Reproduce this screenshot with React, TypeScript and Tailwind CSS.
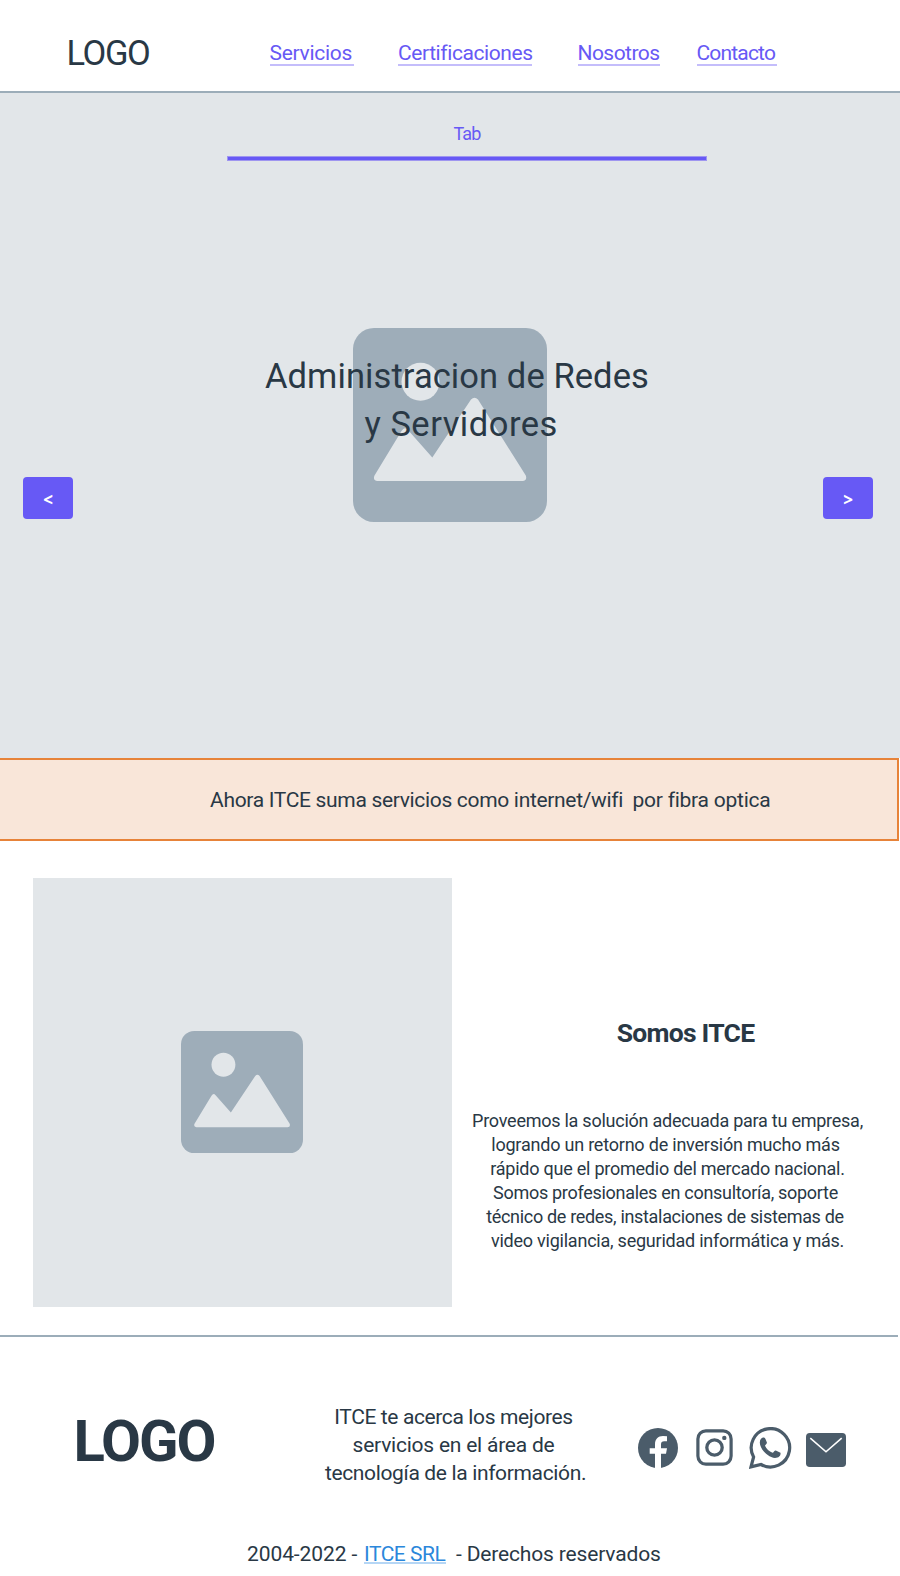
const paragraph = [
  { text: "Proveemos la solución adecuada para tu empresa,", style: "tracking-[-0.25px]" },
  { text: "logrando un retorno de inversión mucho más", style: "tracking-[-0.21px] pr-1" },
  { text: "rápido que el promedio del mercado nacional.", style: "tracking-[-0.235px]" },
  { text: "Somos profesionales en consultoría, soporte", style: "tracking-[-0.29px] pr-1" },
  { text: "técnico de redes, instalaciones de sistemas de", style: "tracking-[-0.32px] pr-[5px]" },
  { text: "video vigilancia, seguridad informática y más.", style: "tracking-[-0.23px]" },
];

const links = [
  { text: "Servicios", style: "w-[84px] tracking-[-0.28px]" },
  { text: "Certificaciones", style: "w-[134px] ml-[44.5px] tracking-[-0.42px]" },
  { text: "Nosotros", style: "w-[82px] ml-[45.5px] tracking-[-0.55px]" },
  { text: "Contacto", style: "w-[80px] ml-[37px] tracking-[-0.82px]" },
];

function ImagePlaceholder({ className }: { className: string }) {
  return (
    <svg viewBox="0 0 194 194" className={className} aria-hidden="true">
      <rect width="194" height="194" rx="21" fill="#9eadb9" />
      <circle cx="67.5" cy="53.7" r="19" fill="#e2e6e9" />
      <path
        fill="#e2e6e9"
        d="M24.5 153Q19.5 152.5 21.5 147.5L48.5 103Q51.5 98 55 102L79.3 129.5L118 71.5Q121.5 68 125 71.5L172.8 147.5Q174.5 152.5 169.5 153Z"
      />
    </svg>
  );
}

function ArrowButton({ children, label }: { children: string; label: string }) {
  return (
    <button
      aria-label={label}
      className="flex h-[42px] w-[50px] items-center justify-center rounded bg-[#6759f5] pt-[3px] font-['Open_Sans',sans-serif] text-[17px] leading-none font-bold text-white"
    >
      {children}
    </button>
  );
}

function Header() {
  return (
    <header className="flex h-[93px] items-start border-b-2 border-[#9cadb9]">
      <div className="mt-[33px] ml-[66.5px] w-[203px] text-[34.5px] leading-10 tracking-[-1.4px]">LOGO</div>
      <nav className="mt-10 flex">
        {links.map((l) => (
          <a
            key={l.text}
            href="#"
            className={`block h-[26px] border-b-2 border-[#c4bdfb] text-[21px] leading-[26px] whitespace-nowrap text-[#6759f5] ${l.style}`}
          >
            {l.text}
          </a>
        ))}
      </nav>
    </header>
  );
}

function Hero() {
  return (
    <section className="grid h-[665px] bg-[#e2e6e9]">
      <div className="col-start-1 row-start-1 flex justify-center pt-[235px]">
        <ImagePlaceholder className="size-[194px]" />
      </div>
      <div className="z-10 col-start-1 row-start-1">
        <div className="ml-[227px] w-[480px] pt-[29px] text-center text-lg leading-6 tracking-[-0.9px] text-[#6759f5]">
          Tab
          <div className="mt-[10px] h-[5px] border border-[#9f96f0] bg-[#6759f5]" />
        </div>
        <h1 className="mt-[191px] text-[34.5px] leading-[48px] whitespace-nowrap">
          <span className="block pl-[265px] tracking-[0.08px]">Administracion de Redes</span>
          <span className="block pl-[364.5px] tracking-[0.5px]">y Servidores</span>
        </h1>
        <div className="mt-[29px] flex justify-between pr-[27px] pl-[23px]">
          <ArrowButton label="Anterior">&lt;</ArrowButton>
          <ArrowButton label="Siguiente">&gt;</ArrowButton>
        </div>
      </div>
    </section>
  );
}

function Footer() {
  return (
    <footer>
      <div className="mt-7 w-[898px] border-t-2 border-[#9cadb9]" />
      <div className="flex h-[203px] items-start">
        <div className="mt-[72px] ml-[73.5px] w-[232px] text-[58px] leading-[64px] font-bold tracking-[-2px]">LOGO</div>
        <p className="mt-[66px] w-[300px] text-center text-[21px] leading-7">
          <span className="block pr-1 tracking-[-0.38px]">ITCE te acerca los mejores</span>
          <span className="block pr-1 tracking-[-0.23px]">servicios en el área de</span>
          <span className="block tracking-[-0.35px]">tecnología de la información.</span>
        </p>
        <div className="mt-[90px] ml-[32.5px] flex items-start text-[#4b5c6a]">
          <svg viewBox="0 0 40 40" className="mt-px size-10">
            <circle cx="20" cy="20" r="20" fill="currentColor" />
            <path
              fill="#fff"
              d="M17 40V25.7H11.7V20.3H17V16.5C17 11 20 8 25 8Q27.3 8 29 8.3V13.3H26.2C24 13.3 23 14.5 23 16.5V20.3H29L28 25.7H23V40Z"
            />
          </svg>
          <svg viewBox="0 0 37 37" className="mt-[2px] ml-[17.5px] size-[37px]" fill="none" stroke="currentColor" strokeWidth="3.2">
            <rect x="1.9" y="1.9" width="33.2" height="33.2" rx="8" />
            <circle cx="18.5" cy="18.5" r="7.7" strokeWidth="3.3" />
            <circle cx="28.3" cy="8.9" r="2.2" fill="currentColor" stroke="none" />
          </svg>
          <svg viewBox="0 0 43 43" className="ml-[16px] size-[43px]">
            <path
              d="M4.6 30L2 39.9L12 37.5A19.2 19.2 0 1 0 4.6 30Z"
              fill="none"
              stroke="currentColor"
              strokeWidth="3.2"
            />
            <path
              fill="currentColor"
              d="M10.8 15.5C10.8 12 13 10.3 15 10.5C16.3 10.6 16.7 12.5 17.9 15.5C18.2 16.5 16.5 17.8 16 18.8C17.5 22 20 24.5 23.5 25.8C24.5 25.5 25.6 23.2 26.8 23.4L31.5 25.8C32 28.5 30 31 26 31C19 30.5 10.8 22 10.8 15.5Z"
            />
          </svg>
          <svg viewBox="0 0 40 34" className="mt-[6px] ml-[14.5px] h-[34px] w-10">
            <rect width="40" height="34" rx="3.8" fill="currentColor" />
            <path d="M4.3 5.2L20 18.8L35.7 5.2" fill="none" stroke="#fff" strokeWidth="1.6" />
          </svg>
        </div>
      </div>
      <p className="flex pl-[247px] text-[21px] leading-7 whitespace-nowrap">
        <span className="w-[117px] tracking-[-0.09px]">2004-2022 -</span>
        <a href="#" className="mr-[10.5px] h-[24px] w-[81.5px] border-b-2 border-[#b5d6f5] tracking-[-0.49px] text-[#2b87db]">
          ITCE SRL
        </a>
        <span className="tracking-[-0.16px]">- Derechos reservados</span>
      </p>
    </footer>
  );
}

export default function App() {
  return (
    <div className="h-[1576px] w-[900px] overflow-hidden bg-white font-['Roboto',sans-serif] text-[#293845]">
      <Header />
      <Hero />
      <section className="flex h-[83px] w-[899px] items-center border-y-2 border-r-2 border-[#e78339] bg-[#f9e6d9] pl-[210px] text-[21px] leading-7 whitespace-nowrap">
        <span className="w-[422.5px] tracking-[-0.32px]">Ahora ITCE suma servicios como internet/wifi</span>
        <span className="tracking-[-0.24px]">por fibra optica</span>
      </section>
      <section className="mt-[37px] flex pl-[33px]">
        <div className="flex h-[429px] w-[419px] items-center justify-center bg-[#e2e6e9] pr-px pb-[2px]">
          <ImagePlaceholder className="size-[122px]" />
        </div>
        <div className="w-[431px] pt-[137px] text-center whitespace-nowrap">
          <h2 className="pl-[36px] text-[26.5px] leading-9 font-bold tracking-[-0.74px]">Somos ITCE</h2>
          <p className="mt-[58px] text-lg leading-6">
            {paragraph.map((l) => (
              <span key={l.text} className={`block ${l.style}`}>
                {l.text}
              </span>
            ))}
          </p>
        </div>
      </section>
      <Footer />
    </div>
  );
}
